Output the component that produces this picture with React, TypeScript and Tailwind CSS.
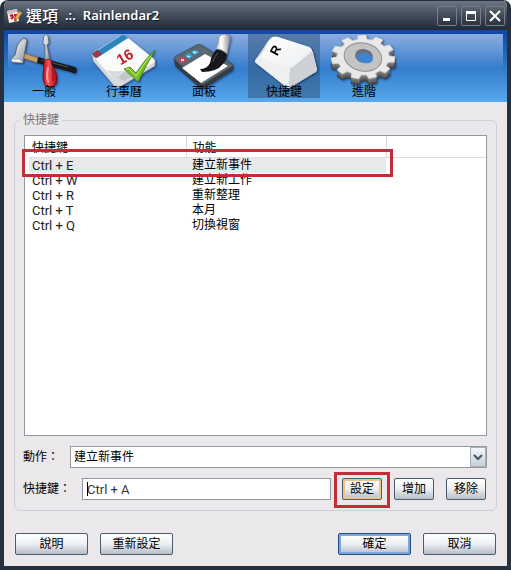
import { useState } from "react";
import type { ReactNode } from "react";
import clsx from "clsx";

const SHORTCUTS = [
  { keys: "Ctrl + E", action: "建立新事件" },
  { keys: "Ctrl + W", action: "建立新工作" },
  { keys: "Ctrl + R", action: "重新整理" },
  { keys: "Ctrl + T", action: "本月" },
  { keys: "Ctrl + Q", action: "切換視窗" },
];

const GEAR_TEETH = 11;

// Outline of the cog, seen slightly from above
const gearPath = (cx: number, cy: number) => {
  const points: string[] = [];
  const steps = [
    [-0.32, 0.82],
    [-0.22, 1],
    [0.22, 1],
    [0.32, 0.82],
  ];
  for (let i = 0; i < GEAR_TEETH; i++) {
    for (const [offset, radius] of steps) {
      const angle = ((i + offset) / GEAR_TEETH) * Math.PI * 2 - 1.6;
      const x = cx + Math.cos(angle) * 32 * radius;
      const y = cy + Math.sin(angle) * 22 * radius;
      points.push(`${x.toFixed(1)} ${y.toFixed(1)}`);
    }
  }
  return `M${points.join("L")}Z`;
};

const iconClass = "h-16 w-full overflow-visible [grid-area:1/1] drop-shadow-[1px_1px_1px_rgba(10,25,60,0.6)]";

function ToolsIcon() {
  return (
    <svg viewBox="0 0 72 64" className={iconClass} aria-hidden="true">
      <defs>
        <linearGradient id="steel" x1="0" x2="1" y2="1">
          <stop offset="0" stopColor="#f5f7f8" />
          <stop offset="0.5" stopColor="#c8cfd3" />
          <stop offset="1" stopColor="#7c868d" />
        </linearGradient>
        <linearGradient id="grip" x1="0" x2="1">
          <stop offset="0" stopColor="#b40f14" />
          <stop offset="0.4" stopColor="#f4525a" />
          <stop offset="1" stopColor="#9d0910" />
        </linearGradient>
      </defs>
      <path d="M15 19L31 24L30 29L14 24Z" fill="#c99c62" stroke="#826031" strokeWidth="0.6" />
      <path d="M30 23L67 33Q70 35 68 39Q66 40 63 38L29 29Z" fill="#17191d" />
      <path d="M34 26L60 33" stroke="#4b4e53" strokeWidth="1" />
      <path d="M16 4L19 6L17 17L15 29L4 28L3 25L7 21L9 12Q11 7 16 4Z" fill="url(#steel)" stroke="#4b575f" strokeWidth="0.8" />
      <path d="M3 25L12 25L15 29L4 28Z" fill="#eef1f2" stroke="#69757d" strokeWidth="0.5" />
      <path d="M36 2Q38 -1 40 2L41 9L39 11L42 26L37 26L37 11L35 9Z" fill="url(#steel)" stroke="#59656d" strokeWidth="0.7" />
      <path d="M36 27Q39 24 43 26L44 31Q49 38 49 45Q49 53 42 53Q36 53 35 45Q35 38 36 31Z" fill="url(#grip)" stroke="#730409" strokeWidth="0.7" />
      <path d="M40 34Q38 42 40 48" fill="none" stroke="#ff9c9c" strokeWidth="2" strokeLinecap="round" />
      <path d="M44 34Q46 41 45 47" fill="none" stroke="#8c0810" strokeWidth="1" />
    </svg>
  );
}

function CalendarIcon() {
  return (
    <svg viewBox="0 0 72 64" className={iconClass} aria-hidden="true">
      <path d="M4 21L5 27L27 53Q30 55 32 53L67 32L67 27Z" fill="#d5d9dd" stroke="#7e8791" strokeWidth="0.6" />
      <path d="M4 21Q4 19 6 18L32 2Q35 0 38 2L66 25Q68 27 66 29L32 49Q29 51 27 48Z" fill="#fbfbfc" stroke="#c7ccd2" strokeWidth="0.6" />
      <path d="M4 20Q4 19 6 18L32 2Q35 0 38 2L40 4L9 24L6 23Z" fill="#2b86bd" />
      <path d="M4 20L8 24L14 20L10 16Z" fill="#a93544" />
      <path d="M10 16L32 2" stroke="#8ec4e4" strokeWidth="1" />
      <path d="M19 36Q28 38 37 37L44 42L32 49Q29 51 27 48Z" fill="#d9dcdf" />
      <path d="M30 44L37 37L44 42L36 47Z" fill="#c2c6ca" />
      <text
        x="37"
        y="28"
        textAnchor="middle"
        transform="rotate(-31 37 23)"
        className="fill-[#c51f26] font-['Liberation_Sans',sans-serif] text-[15px] font-bold"
      >
        16
      </text>
      <path d="M36 35L42 33L48 39Q57 25 67 16Q58 32 50 48Z" fill="#79bd25" stroke="#3c7f13" strokeWidth="0.8" />
      <path d="M38 35L41 35L48 42Q56 29 63 22" fill="none" stroke="#c4ec72" strokeWidth="1" />
    </svg>
  );
}

function PanelIcon() {
  return (
    <svg viewBox="0 0 72 64" className={iconClass} aria-hidden="true">
      <defs>
        <linearGradient id="handle" x1="0" x2="1">
          <stop offset="0" stopColor="#c6c9cc" />
          <stop offset="0.4" stopColor="#fff" />
          <stop offset="1" stopColor="#85898e" />
        </linearGradient>
      </defs>
      <path d="M6 25L7 32L32 54Q34 56 37 54L65 36L65 31Z" fill="#343b42" />
      <path d="M6 25Q6 23 8 22L29 11Q31 10 33 11L64 30Q66 31 63 33L36 50Q34 51 32 49Z" fill="#5b6771" stroke="#3d4750" strokeWidth="0.7" />
      <path d="M14 34L37 20L60 32L33 49Z" fill="#fff" />
      <path d="M10 26L15 23L19 26L14 29Z" fill="#d93850" />
      <path d="M17 22L21 19L25 22L21 25Z" fill="#2ba7e2" />
      <path d="M23 18L27 16L31 18L27 21Z" fill="#48b5e7" />
      <path d="M13 25L16 27M16 25L13 27M19 22L22 23M25 18L28 19" stroke="#fff" strokeWidth="1" />
      <path d="M49 15Q55 15 59 20Q59 26 55 30Q49 38 34 38L32 35Q39 35 42 29Q44 19 49 15Z" fill="#17181b" />
      <path d="M45 28Q46 22 50 19" fill="none" stroke="#55585c" strokeWidth="1" />
      <path d="M48 15Q51 9 51 3Q56 -2 62 2Q63 6 61 10L59 20Q54 15 48 15Z" fill="url(#handle)" stroke="#8a8f94" strokeWidth="0.5" />
    </svg>
  );
}

function KeyIcon() {
  return (
    <svg viewBox="0 0 72 64" className={iconClass} aria-hidden="true">
      <defs>
        <linearGradient id="keyTop" x1="0" x2="1" y2="1">
          <stop offset="0" stopColor="#fff" />
          <stop offset="1" stopColor="#eceef0" />
        </linearGradient>
      </defs>
      <path d="M24 3Q27 2 30 3L61 13Q64 15 65 18L69 35Q69 38 66 39L43 53Q40 55 37 52L8 29Q6 28 8 25L20 7Z" fill="#d5d8dc" />
      <path d="M8 25L14 20L42 34L41 54Q38 54 37 52L8 29Q6 28 8 25Z" fill="#eff0f2" />
      <path d="M42 34L64 18L69 35Q69 38 66 39L41 54Z" fill="#cdd1d5" />
      <path d="M22 5Q25 2 30 3L61 13Q65 15 63 18L46 32Q43 35 39 33L14 24Q12 22 14 20Z" fill="url(#keyTop)" />
      <text
        x="27"
        y="21"
        textAnchor="middle"
        transform="rotate(-62 27 16)"
        className="fill-black font-['Liberation_Sans',sans-serif] text-[13px] font-bold"
      >
        R
      </text>
    </svg>
  );
}

function GearIcon() {
  return (
    <svg viewBox="0 0 72 64" className={iconClass} aria-hidden="true">
      <g strokeLinejoin="round">
        <path d={gearPath(35, 29)} fill="#505153" stroke="#404143" />
        <path d={gearPath(35, 27)} fill="#68696b" />
        <path d={gearPath(35, 25)} fill="#7d7e80" />
        <path d={gearPath(35, 23)} fill="#e9e9e9" stroke="#cfcfcf" strokeWidth="0.8" />
      </g>
      <ellipse cx="35" cy="23" rx="19" ry="14" transform="rotate(12 35 23)" fill="#c2c3c4" stroke="#909193" strokeWidth="1" />
      <ellipse cx="36" cy="22" rx="9" ry="7" transform="rotate(12 36 22)" fill="#6c6e71" />
      <ellipse cx="37" cy="24" rx="8" ry="5" transform="rotate(12 37 24)" fill="#3b85d2" />
    </svg>
  );
}

const TABS: { label: string; icon: ReactNode }[] = [
  { label: "一般", icon: <ToolsIcon /> },
  { label: "行事曆", icon: <CalendarIcon /> },
  { label: "面板", icon: <PanelIcon /> },
  { label: "快捷鍵", icon: <KeyIcon /> },
  { label: "進階", icon: <GearIcon /> },
];

function AppIcon() {
  return (
    <svg viewBox="0 0 16 16" className="size-4" aria-hidden="true">
      <path d="M1 3L11 1L13 13L3 15Z" fill="#f5eeee" />
      <path d="M1 3L11 1L11 4L2 6Z" fill="#cbbbc0" />
      <path d="M4 8L6 7L7 9L5 11M8 7L10 7L9 11" fill="none" stroke="#bd2028" strokeWidth="2" />
      <path d="M13 3L16 5L11 12L8 14L9 10Z" fill="#e7a746" />
      <path d="M9 10L11 12L8 14Z" fill="#7c4c29" />
    </svg>
  );
}

function WindowButton({ label, children }: { label: string; children: ReactNode }) {
  return (
    <button
      type="button"
      aria-label={label}
      className="grid size-5 place-items-center rounded-xs border border-[#75808c] bg-linear-to-b from-[#5b6570] to-[#29323e]"
    >
      <svg viewBox="0 0 14 14" className="size-3.5" fill="none" stroke="#fff">
        {children}
      </svg>
    </button>
  );
}

type PushButtonProps = {
  children: ReactNode;
  variant?: "normal" | "focused" | "hot";
  small?: boolean;
};

function PushButton({ children, variant = "normal", small = false }: PushButtonProps) {
  return (
    <button
      type="button"
      className={clsx(
        "h-[22px] shrink-0 rounded-xs border border-[#4d5b6b] bg-linear-to-b from-white via-[#eceff2] to-[#b5bec8]",
        small ? "w-10" : "w-[73px]",
        variant === "focused" && "border-[#274b80] inset-ring-2 inset-ring-[#7fa6dc]",
        variant === "hot" && "inset-ring-2 inset-ring-[#edc484]",
      )}
    >
      {children}
    </button>
  );
}

export default function App() {
  const [tab, setTab] = useState(3);
  const [selected, setSelected] = useState(0);
  const [action, setAction] = useState("建立新事件");
  const [shortcut, setShortcut] = useState("Ctrl + A");

  return (
    <div
      lang="zh-Hant"
      className="flex min-h-screen flex-col overflow-hidden rounded-t-lg border-4 border-t-0 border-[#27303e] bg-[#ebe8ec] font-[Roboto,'Noto_Sans_CJK_TC',sans-serif] text-xs/[15px] text-black"
    >
      <header className="-mx-1 flex h-[30px] items-center gap-1 border-t border-[#27303e] bg-linear-to-b from-[#6d7682] via-[#424c5a] to-[#202938] pr-1.5 pl-1.5">
        <AppIcon />
        <h1 className="flex grow items-center gap-[7px] font-['Noto_Sans','Noto_Sans_CJK_TC',sans-serif] text-[13px] font-semibold text-white text-shadow-[1px_1px_1px_#111827]">
          <span className="text-base font-medium">選項</span>
          <span>.:.</span>
          <span>Rainlendar2</span>
        </h1>
        <div className="flex gap-1">
          <WindowButton label="最小化">
            <path d="M3 10.5H10" strokeWidth="3" />
          </WindowButton>
          <WindowButton label="最大化">
            <path d="M2 3.5H12" strokeWidth="3" />
            <path d="M2.5 3V11.5H11.5V3" />
          </WindowButton>
          <WindowButton label="關閉">
            <path d="M2 2L12 12M12 2L2 12" strokeWidth="2" />
          </WindowButton>
        </div>
      </header>

      <nav className="border-t-4 border-[#104aa6] bg-linear-to-b from-[#104aa6] to-[#58a8ea] px-1">
        <div className="flex h-[68px] gap-2 bg-linear-to-b from-[#8badde] via-[#347dce] to-[#58a8ea]">
          {TABS.map((item, i) => (
            <button
              key={item.label}
              type="button"
              onClick={() => setTab(i)}
              className={clsx("grid h-16 w-[72px]", tab === i && "bg-[#355d88]/60")}
            >
              {item.icon}
              <span className="z-10 self-end leading-3 [grid-area:1/1]">{item.label}</span>
            </button>
          ))}
        </div>
      </nav>

      <main className="flex grow flex-col px-2.5 pt-[11px]">
        <fieldset className="min-w-0 rounded-md border border-[#d0cdd3] px-[9px] pb-[10px]">
          <legend className="-ml-1 px-[3px] leading-[14px] text-[#77757b]">快捷鍵</legend>

          <div className="relative mt-2 h-[301px] border border-[#96979c] bg-white">
            <table className="w-full table-fixed border-collapse text-left">
              <colgroup>
                <col className="w-[159px]" />
                <col className="w-[200px]" />
                <col />
              </colgroup>
              <thead>
                <tr className="h-[21px] border-b border-[#dddddf]">
                  <th className="border-r border-[#dad9dc] p-0 pt-1 pl-[5px] font-normal">快捷鍵</th>
                  <th className="border-r border-[#dad9dc] p-0 pt-1 pl-1.5 font-normal">功能</th>
                  <th className="p-0" />
                </tr>
              </thead>
              <tbody>
                {SHORTCUTS.map((row, i) => (
                  <tr key={row.keys} onClick={() => setSelected(i)} className="h-[15px]">
                    <td
                      className={clsx(
                        "border-l-4 border-white p-0 pl-[3px] text-[13px]/[15px] text-[#222]",
                        selected === i && "bg-[#ebe8ec]",
                      )}
                    >
                      {row.keys}
                    </td>
                    <td className={clsx("p-0 pl-1.5", selected === i && "bg-[#ebe8ec]")}>{row.action}</td>
                    <td className="p-0" />
                  </tr>
                ))}
              </tbody>
            </table>
            <div className="pointer-events-none absolute top-[13px] -left-[3px] h-7 w-[371px] border-3 border-[#c32e36]" />
          </div>

          <div className="mt-2.5 flex items-center gap-[11px]">
            <label htmlFor="action" className="-ml-px shrink-0">動作：</label>
            <div className="relative grow">
              <select
                id="action"
                value={action}
                onChange={(e) => setAction(e.target.value)}
                className="h-[22px] w-full appearance-none border border-[#96979c] bg-white pr-5 pl-[3px]"
              >
                {SHORTCUTS.map((row) => (
                  <option key={row.action}>{row.action}</option>
                ))}
              </select>
              <span className="pointer-events-none absolute inset-y-px right-px grid w-4 place-items-center border border-[#a6b1bc] bg-linear-to-b from-[#f5f8fa] to-[#c6d0da]">
                <svg viewBox="0 0 10 8" className="h-2 w-2.5" fill="none" stroke="#465468" strokeWidth="2">
                  <path d="M1 2L5 6L9 2" />
                </svg>
              </span>
            </div>
          </div>

          <div className="mt-2.5 flex items-center pr-px">
            <label htmlFor="shortcut" className="-ml-px shrink-0">快捷鍵：</label>
            <div className="relative ml-[11px] min-w-0 grow">
              <input
                id="shortcut"
                type="text"
                value={shortcut}
                onChange={(e) => setShortcut(e.target.value)}
                className="block h-[22px] w-full border border-[#96979c] bg-white px-1 text-[13px]/[15px] text-[#333]"
              />
              <span className="pointer-events-none absolute top-1 left-[5px] h-3.5 w-px bg-black" />
            </div>
            <div className="ml-[11px] flex gap-3">
              <div className="relative flex">
                <PushButton small variant="hot">設定</PushButton>
                <div className="pointer-events-none absolute -inset-x-2 -top-1.5 -bottom-2 border-3 border-[#c32e36]" />
              </div>
              <PushButton small>增加</PushButton>
              <PushButton small>移除</PushButton>
            </div>
          </div>
        </fieldset>

        <footer className="mt-[22px] mb-[11px] flex gap-3 px-px">
          <PushButton>說明</PushButton>
          <PushButton>重新設定</PushButton>
          <div className="grow" />
          <PushButton variant="focused">確定</PushButton>
          <PushButton>取消</PushButton>
        </footer>
      </main>
    </div>
  );
}
